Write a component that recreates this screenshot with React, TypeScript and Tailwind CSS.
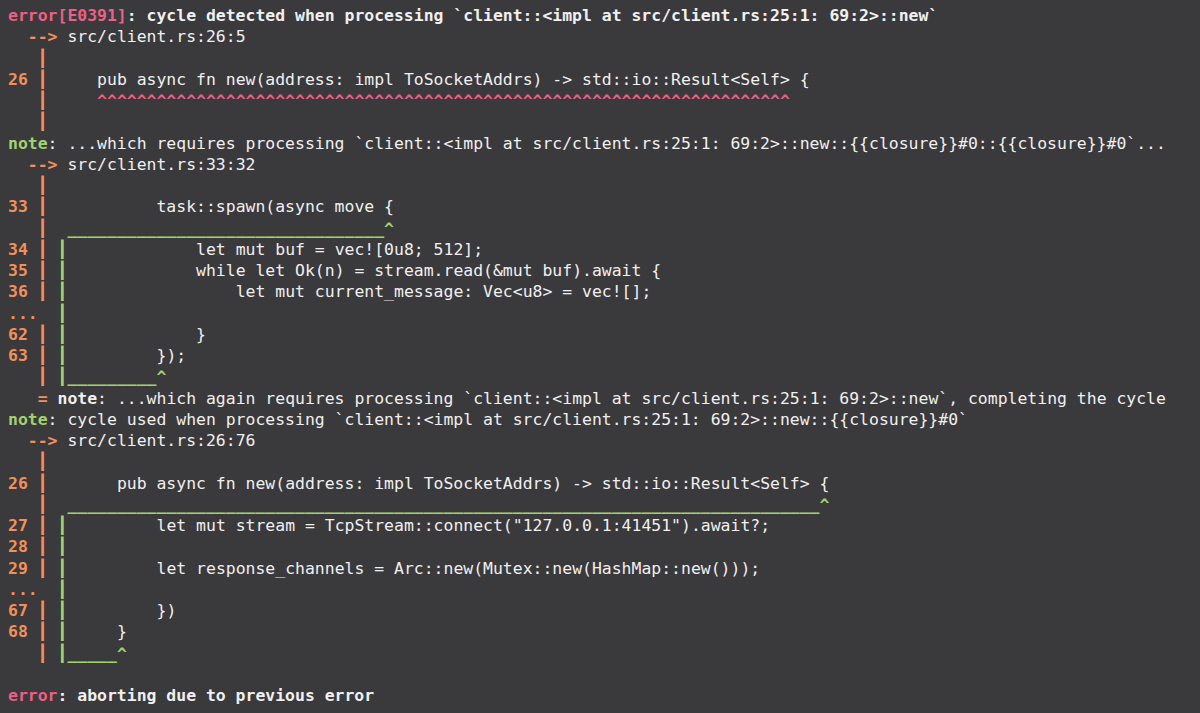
import React from "react";

const O = ({ children }: { children: React.ReactNode }) => (
  <span className="text-[#f2905a] font-bold">{children}</span>
);
const G = ({ children }: { children: React.ReactNode }) => (
  <span className="text-[#a3d36b] font-bold">{children}</span>
);
const R = ({ children }: { children: React.ReactNode }) => (
  <span className="text-[#ee5f86] font-bold">{children}</span>
);
const B = ({ children }: { children: React.ReactNode }) => (
  <span className="font-bold">{children}</span>
);

const sp = (n: number) => " ".repeat(n);
const P = "┃";

export default function App() {
  const sig = "pub async fn new(address: impl ToSocketAddrs) -> std::io::Result<Self> {";
  const lines: React.ReactNode[] = [
    <><R>error[E0391]</R><B>: cycle detected when processing `client::&lt;impl at src/client.rs:25:1: 69:2&gt;::new`</B></>,
    <>{sp(2)}<O>--&gt;</O> src/client.rs:26:5</>,
    <>{sp(3)}<O>{P}</O></>,
    <><O>26 {P}</O>{sp(5)}{sig}</>,
    <>{sp(3)}<O>{P}</O>{sp(5)}<R>{"^".repeat(70)}</R></>,
    <>{sp(3)}<O>{P}</O></>,
    <><G>note</G>: ...which requires processing `client::&lt;impl at src/client.rs:25:1: 69:2&gt;::new::{"{{closure}}"}#0::{"{{closure}}"}#0`...</>,
    <>{sp(2)}<O>--&gt;</O> src/client.rs:33:32</>,
    <>{sp(3)}<O>{P}</O></>,
    <><O>33 {P}</O>{sp(11)}task::spawn(async move {"{"}</>,
    <>{sp(3)}<O>{P}</O>{sp(2)}<G>{"_".repeat(32) + "^"}</G></>,
    <><O>34 {P}</O> <G>{P}</G>{sp(13)}let mut buf = vec![0u8; 512];</>,
    <><O>35 {P}</O> <G>{P}</G>{sp(13)}while let Ok(n) = stream.read(&amp;mut buf).await {"{"}</>,
    <><O>36 {P}</O> <G>{P}</G>{sp(17)}let mut current_message: Vec&lt;u8&gt; = vec![];</>,
    <><O>...</O>{sp(2)}<G>{P}</G></>,
    <><O>62 {P}</O> <G>{P}</G>{sp(13)}{"}"}</>,
    <><O>63 {P}</O> <G>{P}</G>{sp(9)}{"});"}</>,
    <>{sp(3)}<O>{P}</O> <G>{P + "_".repeat(9) + "^"}</G></>,
    <>{sp(3)}<O>=</O> <B>note</B>: ...which again requires processing `client::&lt;impl at src/client.rs:25:1: 69:2&gt;::new`, completing the cycle</>,
    <><G>note</G>: cycle used when processing `client::&lt;impl at src/client.rs:25:1: 69:2&gt;::new::{"{{closure}}"}#0`</>,
    <>{sp(2)}<O>--&gt;</O> src/client.rs:26:76</>,
    <>{sp(3)}<O>{P}</O></>,
    <><O>26 {P}</O>{sp(7)}{sig}</>,
    <>{sp(3)}<O>{P}</O>{sp(2)}<G>{"_".repeat(76) + "^"}</G></>,
    <><O>27 {P}</O> <G>{P}</G>{sp(9)}let mut stream = TcpStream::connect("127.0.0.1:41451").await?;</>,
    <><O>28 {P}</O> <G>{P}</G></>,
    <><O>29 {P}</O> <G>{P}</G>{sp(9)}let response_channels = Arc::new(Mutex::new(HashMap::new()));</>,
    <><O>...</O>{sp(2)}<G>{P}</G></>,
    <><O>67 {P}</O> <G>{P}</G>{sp(9)}{"})"}</>,
    <><O>68 {P}</O> <G>{P}</G>{sp(5)}{"}"}</>,
    <>{sp(3)}<O>{P}</O> <G>{P + "_".repeat(5) + "^"}</G></>,
    <>{" "}</>,
    <><R>error</R><B>: aborting due to previous error</B></>,
  ];

  return (
    <div className="w-full min-h-screen bg-[#3a393c] text-[#f0f0f0] pt-[5px] pl-2 font-['DejaVu_Sans_Mono',monospace] text-[16.45px] leading-[21.25px]">
      {lines.map((line, i) => (
        <div key={i} className="whitespace-pre h-[21.25px]">
          {line}
        </div>
      ))}
    </div>
  );
}
